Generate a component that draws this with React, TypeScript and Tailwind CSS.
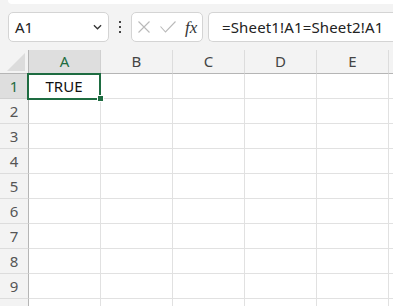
import { Fragment } from 'react'

const COLS = ['A', 'B', 'C', 'D', 'E', 'F']
const ROWS = [1, 2, 3, 4, 5, 6, 7, 8, 9, 10]

export default function App() {
  return (
    <div
      className="h-[306px] w-[393px] overflow-hidden bg-white text-[#222]"
      style={{ fontFamily: '"Noto Sans", "Liberation Sans", sans-serif' }}
    >
      <Toolbar />
      <Sheet />
    </div>
  )
}

function Toolbar() {
  return (
    <div className="h-[50px] bg-[#f3f3f3]">
      <div className="ml-2 h-[4px] rounded-bl-md bg-white" />
      <div className="mt-2 flex h-[30px] items-stretch">
        <div className="ml-2 flex w-[101px] items-center justify-between rounded-[5px] border border-[#d4d4d4] bg-white pl-[6px] pr-[6px]">
          <span className="text-[15px] leading-none">A1</span>
          <svg viewBox="0 0 10 6" className="h-[6px] w-[9px]" fill="none" stroke="#333" strokeWidth="1.4">
            <path d="M1 1l4 4 4-4" />
          </svg>
        </div>
        <div className="flex w-[22px] flex-col items-center justify-center gap-[3px]">
          <span className="h-[2px] w-[2px] bg-[#444]" />
          <span className="h-[2px] w-[2px] bg-[#444]" />
          <span className="h-[2px] w-[2px] bg-[#444]" />
        </div>
        <div className="flex w-[72px] items-center rounded-[5px] border border-[#d4d4d4] bg-white pl-[6px]">
          <svg viewBox="0 0 12 12" className="h-[12px] w-[12px]" fill="none" stroke="#b9b9b9" strokeWidth="1.1">
            <path d="M0.5 0.5l11 11M11.5 0.5l-11 11" />
          </svg>
          <svg viewBox="0 0 16 12" className="ml-[10px] h-[12px] w-[16px]" fill="none" stroke="#b9b9b9" strokeWidth="1.1">
            <path d="M0.5 5.5l5 5.5 10-10.5" />
          </svg>
          <span
            className="ml-[9px] text-[17px] italic leading-none text-[#333]"
            style={{ fontFamily: '"Liberation Serif", "DejaVu Serif", serif' }}
          >
            fx
          </span>
        </div>
        <div className="ml-[5px] flex flex-1 items-center rounded-l-[5px] border border-r-0 border-[#d4d4d4] bg-white pl-[13px]">
          <span className="text-[15px] leading-none tracking-[0.15px]">=Sheet1!A1=Sheet2!A1</span>
        </div>
      </div>
    </div>
  )
}

function Sheet() {
  return (
    <div className="grid grid-cols-[29px_72px_72px_72px_72px_72px_72px] grid-rows-[24px_repeat(10,25px)]">
      <div className="relative border-b border-r border-[#b5b5b5] bg-[#f3f3f3]">
        <svg viewBox="0 0 18 18" className="absolute bottom-[2px] right-[3px] h-[18px] w-[18px]">
          <path d="M18 0L18 18L0 18Z" fill="#dcdcdc" />
        </svg>
      </div>
      {COLS.map((c, i) => (
        <div
          key={c}
          className={`flex items-center justify-center border-b border-r text-[15px] leading-none ${
            i === 0
              ? 'border-b-[#b5b5b5] border-r-[#d0d0d0] bg-[#dedede] text-[#1e6c41]'
              : 'border-b-[#b5b5b5] border-r-[#dcdcdc] bg-[#f3f3f3] text-[#444]'
          }`}
        >
          {c === 'F' ? '' : c}
        </div>
      ))}
      {ROWS.map((r) => (
        <Fragment key={r}>
          <div
            className={`flex items-center justify-center border-b border-r text-[15px] leading-none ${
              r === 1
                ? 'border-b-[#d0d0d0] border-r-[#b5b5b5] bg-[#dedede] text-[#1e6c41]'
                : 'border-b-[#dcdcdc] border-r-[#b5b5b5] bg-[#f3f3f3] text-[#555]'
            }`}
          >
            {r === 10 ? '' : r}
          </div>
          {COLS.map((c) => (
            <div key={c + r} className="relative border-b border-r border-[#e1e1e1] bg-white">
              {r === 1 && c === 'A' && (
                <>
                  <div className="absolute -left-[2px] -top-[1px] z-10 flex h-[27px] w-[74px] items-center justify-center border-2 border-[#1e6c41] text-[15px] leading-none text-[#111]">
                    TRUE
                  </div>
                  <div className="absolute -bottom-[4px] -right-[4px] z-20 h-[7px] w-[7px] border border-white bg-[#1e6c41]" />
                </>
              )}
            </div>
          ))}
        </Fragment>
      ))}
    </div>
  )
}
